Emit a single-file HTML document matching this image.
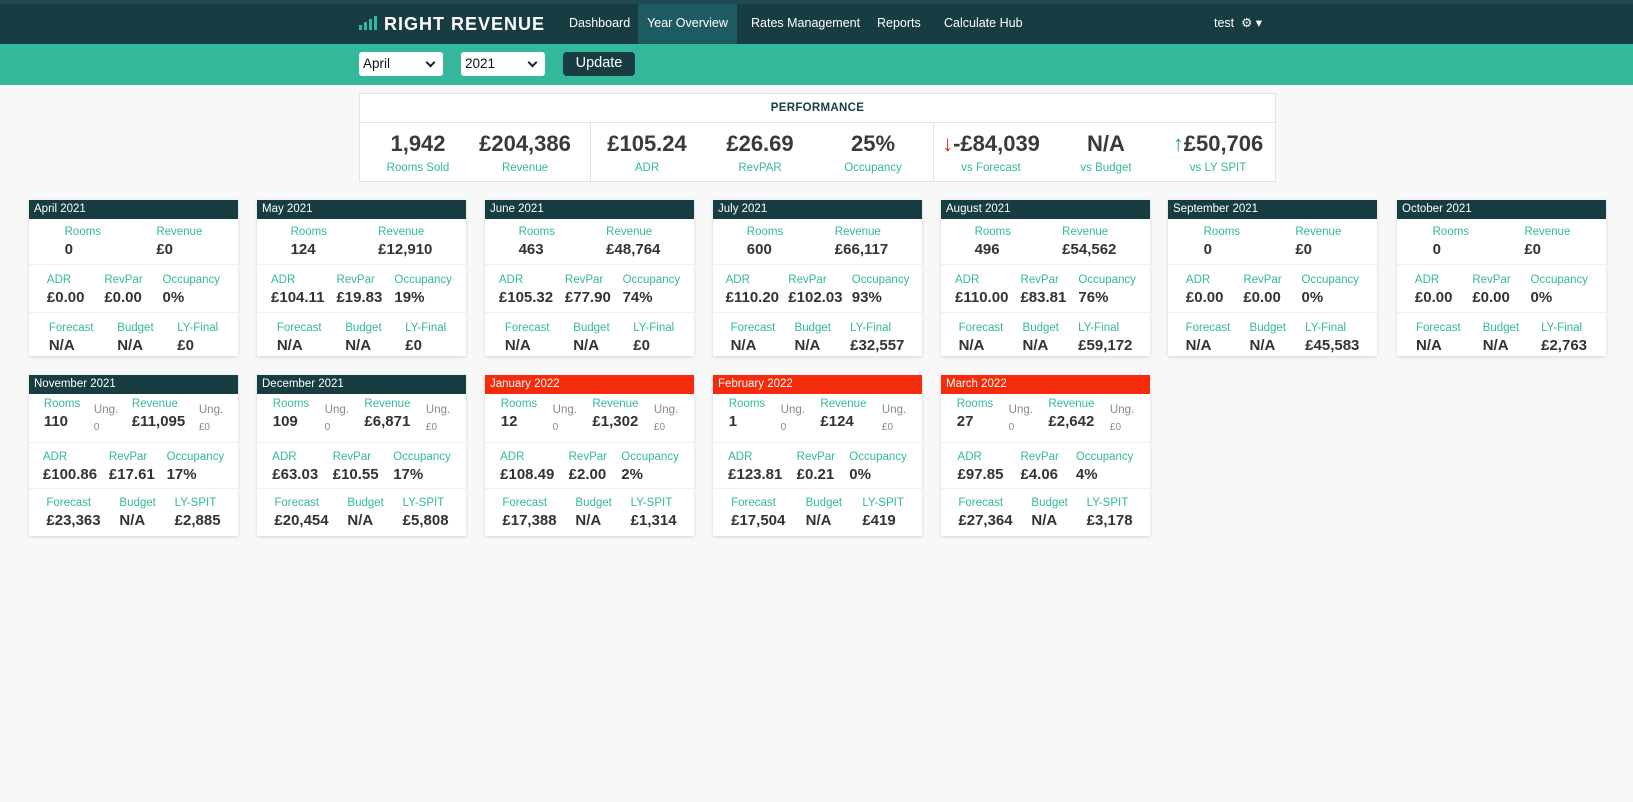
<!DOCTYPE html>
<html><head><meta charset="utf-8"><style>
*{margin:0;padding:0;box-sizing:border-box}
body{width:1633px;height:802px;background:#f8f8f8;font-family:"Liberation Sans",Arial,sans-serif;position:relative;overflow:hidden}
.nav{position:absolute;left:0;top:0;width:1633px;height:44px;background:#173d43;border-top:4px solid #1f4a51}
.nav .logo{position:absolute;left:359px;top:10px;color:#fff;font-weight:bold;font-size:18px;letter-spacing:1px;white-space:nowrap}
.nav .logo span.b{display:inline-block;background:#33b89c;width:3px;margin-right:2px;vertical-align:baseline}
.nav a{position:absolute;top:0;height:40px;line-height:38px;color:#fff;font-size:12.5px;text-decoration:none;white-space:nowrap}
.nav a.act{background:#1e5a62}
.bar{position:absolute;left:0;top:44px;width:1633px;height:41px;background:#33b89c}
.sel{position:absolute;top:52px;height:24px;background:#fff;border-radius:3px;font-size:13.5px;padding:4px 4px;color:#111}
.sel:after{content:"";position:absolute;right:9px;top:7px;width:5px;height:5px;border-right:2px solid #222;border-bottom:2px solid #222;transform:rotate(45deg)}
.upd{position:absolute;left:563px;top:52px;width:72px;height:24px;background:#173d43;color:#fff;border-radius:4px;text-align:center;line-height:23px;font-size:14.5px}
.perf{position:absolute;left:359px;top:93px;width:917px;height:89px;background:#fff;border:1px solid #e3e3e3}
.perf .t{height:29px;border-bottom:1px solid #e3e3e3;text-align:center;line-height:28px;font-size:11.5px;font-weight:bold;color:#173d43;letter-spacing:.3px}
.pc{position:absolute;top:37px;text-align:center;width:120px;margin-left:-60px;white-space:nowrap}
.pc .v{font-size:22px;font-weight:bold;color:#3a3a3a}
.pc .l{font-size:11.5px;color:#33b89c;margin-top:5px}
.dv{position:absolute;top:29px;width:1px;height:59px;background:#e3e3e3}
.card{position:absolute;width:209px;background:#fff;box-shadow:0 1px 3px rgba(0,0,0,.15)}
.h{height:19px;background:#173d43;color:#fff;font-size:11.5px;line-height:19px;padding-left:5px}
.h.r{background:#f62b0b}
.s{display:flex;justify-content:space-around;padding:0 8px;border-bottom:1px solid #eee}
.s:last-child{border-bottom:none}
.c{white-space:nowrap}
.c .l{font-size:11.5px;color:#33b89c}
.c .v{font-size:15px;font-weight:bold;color:#333;margin-top:3px}
.c .u{font-size:11.5px;color:#888;margin-top:6px}
.c .uv{font-size:10px;color:#888;margin-top:6px}
.a1{height:46px;padding-top:7px}.a2{height:48px;padding-top:9px}.a3{height:43px;padding-top:9px}
.b1{height:49px;padding-top:4px}.b2{height:46px;padding-top:8px}.b3{height:47px;padding-top:8px}
</style></head><body>
<div class="nav">
<div class="logo"><span class="b" style="height:5px"></span><span class="b" style="height:8px"></span><span class="b" style="height:11px"></span><span class="b" style="height:14px;margin-right:7px"></span>RIGHT REVENUE</div>
<a style="left:569px">Dashboard</a>
<a class="act" style="left:638px;width:99px;text-align:center">Year Overview</a>
<a style="left:751px">Rates Management</a>
<a style="left:877px">Reports</a>
<a style="left:944px">Calculate Hub</a>
<a style="left:1214px">test &nbsp;⚙ ▾</a>
</div>
<div class="bar"></div>
<div class="sel" style="left:359px;width:84px">April</div>
<div class="sel" style="left:461px;width:84px">2021</div>
<div class="upd">Update</div>
<div class="perf"><div class="t">PERFORMANCE</div>
<div class="dv" style="left:230px"></div><div class="dv" style="left:573px"></div>
<div class="pc" style="left:58px"><div class="v">1,942</div><div class="l">Rooms Sold</div></div>
<div class="pc" style="left:165px"><div class="v">£204,386</div><div class="l">Revenue</div></div>
<div class="pc" style="left:287px"><div class="v">£105.24</div><div class="l">ADR</div></div>
<div class="pc" style="left:400px"><div class="v">£26.69</div><div class="l">RevPAR</div></div>
<div class="pc" style="left:513px"><div class="v">25%</div><div class="l">Occupancy</div></div>
<div class="pc" style="left:631px"><div class="v"><span style="color:#e02020">↓</span>-£84,039</div><div class="l">vs Forecast</div></div>
<div class="pc" style="left:746px"><div class="v">N/A</div><div class="l">vs Budget</div></div>
<div class="pc" style="left:858px"><div class="v"><span style="color:#2fa84f">↑</span>£50,706</div><div class="l">vs LY SPIT</div></div>
</div>

<div class="card" style="left:29px;top:200px"><div class="h">April 2021</div>
<div class="s a1"><div class="c"><div class="l">Rooms</div><div class="v">0</div></div><div class="c"><div class="l">Revenue</div><div class="v">£0</div></div></div>
<div class="s a2"><div class="c"><div class="l">ADR</div><div class="v">£0.00</div></div><div class="c"><div class="l">RevPar</div><div class="v">£0.00</div></div><div class="c"><div class="l">Occupancy</div><div class="v">0%</div></div></div>
<div class="s a3"><div class="c"><div class="l">Forecast</div><div class="v">N/A</div></div><div class="c"><div class="l">Budget</div><div class="v">N/A</div></div><div class="c"><div class="l">LY-Final</div><div class="v">£0</div></div></div></div>

<div class="card" style="left:257px;top:200px"><div class="h">May 2021</div>
<div class="s a1"><div class="c"><div class="l">Rooms</div><div class="v">124</div></div><div class="c"><div class="l">Revenue</div><div class="v">£12,910</div></div></div>
<div class="s a2"><div class="c"><div class="l">ADR</div><div class="v">£104.11</div></div><div class="c"><div class="l">RevPar</div><div class="v">£19.83</div></div><div class="c"><div class="l">Occupancy</div><div class="v">19%</div></div></div>
<div class="s a3"><div class="c"><div class="l">Forecast</div><div class="v">N/A</div></div><div class="c"><div class="l">Budget</div><div class="v">N/A</div></div><div class="c"><div class="l">LY-Final</div><div class="v">£0</div></div></div></div>

<div class="card" style="left:485px;top:200px"><div class="h">June 2021</div>
<div class="s a1"><div class="c"><div class="l">Rooms</div><div class="v">463</div></div><div class="c"><div class="l">Revenue</div><div class="v">£48,764</div></div></div>
<div class="s a2"><div class="c"><div class="l">ADR</div><div class="v">£105.32</div></div><div class="c"><div class="l">RevPar</div><div class="v">£77.90</div></div><div class="c"><div class="l">Occupancy</div><div class="v">74%</div></div></div>
<div class="s a3"><div class="c"><div class="l">Forecast</div><div class="v">N/A</div></div><div class="c"><div class="l">Budget</div><div class="v">N/A</div></div><div class="c"><div class="l">LY-Final</div><div class="v">£0</div></div></div></div>

<div class="card" style="left:713px;top:200px"><div class="h">July 2021</div>
<div class="s a1"><div class="c"><div class="l">Rooms</div><div class="v">600</div></div><div class="c"><div class="l">Revenue</div><div class="v">£66,117</div></div></div>
<div class="s a2"><div class="c"><div class="l">ADR</div><div class="v">£110.20</div></div><div class="c"><div class="l">RevPar</div><div class="v">£102.03</div></div><div class="c"><div class="l">Occupancy</div><div class="v">93%</div></div></div>
<div class="s a3"><div class="c"><div class="l">Forecast</div><div class="v">N/A</div></div><div class="c"><div class="l">Budget</div><div class="v">N/A</div></div><div class="c"><div class="l">LY-Final</div><div class="v">£32,557</div></div></div></div>

<div class="card" style="left:941px;top:200px"><div class="h">August 2021</div>
<div class="s a1"><div class="c"><div class="l">Rooms</div><div class="v">496</div></div><div class="c"><div class="l">Revenue</div><div class="v">£54,562</div></div></div>
<div class="s a2"><div class="c"><div class="l">ADR</div><div class="v">£110.00</div></div><div class="c"><div class="l">RevPar</div><div class="v">£83.81</div></div><div class="c"><div class="l">Occupancy</div><div class="v">76%</div></div></div>
<div class="s a3"><div class="c"><div class="l">Forecast</div><div class="v">N/A</div></div><div class="c"><div class="l">Budget</div><div class="v">N/A</div></div><div class="c"><div class="l">LY-Final</div><div class="v">£59,172</div></div></div></div>

<div class="card" style="left:1168px;top:200px"><div class="h">September 2021</div>
<div class="s a1"><div class="c"><div class="l">Rooms</div><div class="v">0</div></div><div class="c"><div class="l">Revenue</div><div class="v">£0</div></div></div>
<div class="s a2"><div class="c"><div class="l">ADR</div><div class="v">£0.00</div></div><div class="c"><div class="l">RevPar</div><div class="v">£0.00</div></div><div class="c"><div class="l">Occupancy</div><div class="v">0%</div></div></div>
<div class="s a3"><div class="c"><div class="l">Forecast</div><div class="v">N/A</div></div><div class="c"><div class="l">Budget</div><div class="v">N/A</div></div><div class="c"><div class="l">LY-Final</div><div class="v">£45,583</div></div></div></div>

<div class="card" style="left:1397px;top:200px"><div class="h">October 2021</div>
<div class="s a1"><div class="c"><div class="l">Rooms</div><div class="v">0</div></div><div class="c"><div class="l">Revenue</div><div class="v">£0</div></div></div>
<div class="s a2"><div class="c"><div class="l">ADR</div><div class="v">£0.00</div></div><div class="c"><div class="l">RevPar</div><div class="v">£0.00</div></div><div class="c"><div class="l">Occupancy</div><div class="v">0%</div></div></div>
<div class="s a3"><div class="c"><div class="l">Forecast</div><div class="v">N/A</div></div><div class="c"><div class="l">Budget</div><div class="v">N/A</div></div><div class="c"><div class="l">LY-Final</div><div class="v">£2,763</div></div></div></div>

<div class="card" style="left:29px;top:375px"><div class="h">November 2021</div>
<div class="s b1"><div class="c"><div class="l">Rooms</div><div class="v">110</div></div><div class="c"><div class="u">Ung.</div><div class="uv">0</div></div><div class="c"><div class="l">Revenue</div><div class="v">£11,095</div></div><div class="c"><div class="u">Ung.</div><div class="uv">£0</div></div></div>
<div class="s b2"><div class="c"><div class="l">ADR</div><div class="v">£100.86</div></div><div class="c"><div class="l">RevPar</div><div class="v">£17.61</div></div><div class="c"><div class="l">Occupancy</div><div class="v">17%</div></div></div>
<div class="s b3"><div class="c"><div class="l">Forecast</div><div class="v">£23,363</div></div><div class="c"><div class="l">Budget</div><div class="v">N/A</div></div><div class="c"><div class="l">LY-SPIT</div><div class="v">£2,885</div></div></div></div>

<div class="card" style="left:257px;top:375px"><div class="h">December 2021</div>
<div class="s b1"><div class="c"><div class="l">Rooms</div><div class="v">109</div></div><div class="c"><div class="u">Ung.</div><div class="uv">0</div></div><div class="c"><div class="l">Revenue</div><div class="v">£6,871</div></div><div class="c"><div class="u">Ung.</div><div class="uv">£0</div></div></div>
<div class="s b2"><div class="c"><div class="l">ADR</div><div class="v">£63.03</div></div><div class="c"><div class="l">RevPar</div><div class="v">£10.55</div></div><div class="c"><div class="l">Occupancy</div><div class="v">17%</div></div></div>
<div class="s b3"><div class="c"><div class="l">Forecast</div><div class="v">£20,454</div></div><div class="c"><div class="l">Budget</div><div class="v">N/A</div></div><div class="c"><div class="l">LY-SPIT</div><div class="v">£5,808</div></div></div></div>

<div class="card" style="left:485px;top:375px"><div class="h r">January 2022</div>
<div class="s b1"><div class="c"><div class="l">Rooms</div><div class="v">12</div></div><div class="c"><div class="u">Ung.</div><div class="uv">0</div></div><div class="c"><div class="l">Revenue</div><div class="v">£1,302</div></div><div class="c"><div class="u">Ung.</div><div class="uv">£0</div></div></div>
<div class="s b2"><div class="c"><div class="l">ADR</div><div class="v">£108.49</div></div><div class="c"><div class="l">RevPar</div><div class="v">£2.00</div></div><div class="c"><div class="l">Occupancy</div><div class="v">2%</div></div></div>
<div class="s b3"><div class="c"><div class="l">Forecast</div><div class="v">£17,388</div></div><div class="c"><div class="l">Budget</div><div class="v">N/A</div></div><div class="c"><div class="l">LY-SPIT</div><div class="v">£1,314</div></div></div></div>

<div class="card" style="left:713px;top:375px"><div class="h r">February 2022</div>
<div class="s b1"><div class="c"><div class="l">Rooms</div><div class="v">1</div></div><div class="c"><div class="u">Ung.</div><div class="uv">0</div></div><div class="c"><div class="l">Revenue</div><div class="v">£124</div></div><div class="c"><div class="u">Ung.</div><div class="uv">£0</div></div></div>
<div class="s b2"><div class="c"><div class="l">ADR</div><div class="v">£123.81</div></div><div class="c"><div class="l">RevPar</div><div class="v">£0.21</div></div><div class="c"><div class="l">Occupancy</div><div class="v">0%</div></div></div>
<div class="s b3"><div class="c"><div class="l">Forecast</div><div class="v">£17,504</div></div><div class="c"><div class="l">Budget</div><div class="v">N/A</div></div><div class="c"><div class="l">LY-SPIT</div><div class="v">£419</div></div></div></div>

<div class="card" style="left:941px;top:375px"><div class="h r">March 2022</div>
<div class="s b1"><div class="c"><div class="l">Rooms</div><div class="v">27</div></div><div class="c"><div class="u">Ung.</div><div class="uv">0</div></div><div class="c"><div class="l">Revenue</div><div class="v">£2,642</div></div><div class="c"><div class="u">Ung.</div><div class="uv">£0</div></div></div>
<div class="s b2"><div class="c"><div class="l">ADR</div><div class="v">£97.85</div></div><div class="c"><div class="l">RevPar</div><div class="v">£4.06</div></div><div class="c"><div class="l">Occupancy</div><div class="v">4%</div></div></div>
<div class="s b3"><div class="c"><div class="l">Forecast</div><div class="v">£27,364</div></div><div class="c"><div class="l">Budget</div><div class="v">N/A</div></div><div class="c"><div class="l">LY-SPIT</div><div class="v">£3,178</div></div></div></div>
</body></html>
